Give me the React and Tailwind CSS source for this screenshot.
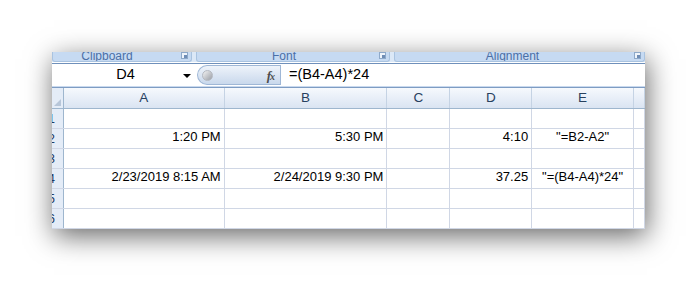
import React from "react";

const cols = [
  { key: "A", w: "w-[161px]" },
  { key: "B", w: "w-[163px]" },
  { key: "C", w: "w-[63px]" },
  { key: "D", w: "w-[82px]" },
  { key: "E", w: "w-[102px]" },
  { key: "F", w: "w-[11px]" },
];

const rows = [
  { n: 1, cells: {} },
  { n: 2, cells: { A: "1:20 PM", B: "5:30 PM", D: "4:10", E: '"=B2-A2"' } },
  { n: 3, cells: {} },
  { n: 4, cells: { A: "2/23/2019 8:15 AM", B: "2/24/2019 9:30 PM", D: "37.25", E: '"=(B4-A4)*24"' } },
  { n: 5, cells: {} },
  { n: 6, cells: {} },
];

function Launcher() {
  return (
    <div className="w-[7px] h-[7px] border border-[#8ea9c9] bg-[#eef4fb] flex items-end justify-end">
      <div className="w-[3px] h-[3px] bg-[#6f8db5]" />
    </div>
  );
}

function Group({ label, w, pad }) {
  return (
    <div className={`${w} h-[10px] relative bg-[#c6daf2] border-x border-b border-[#a9c3e0] rounded-b-[3px] overflow-hidden`}>
      <div className={`text-center text-[12px] leading-[12px] -mt-[2px] text-[#4b6fa6] ${pad}`}>{label}</div>
      <div className="absolute right-[3px] top-0">
        <Launcher />
      </div>
    </div>
  );
}

function App() {
  return (
    <div className="w-[697px] h-[281px] bg-white pt-[52px] pl-[52px] font-['Liberation_Sans',Arial,sans-serif]">
      <div className="w-[593px] h-[177px] bg-white flex flex-col overflow-hidden shadow-[2px_7px_26px_rgba(0,0,0,0.6)]">
        {/* ribbon group labels */}
        <div className="h-[10px] flex gap-[4px] bg-[#dbe8f7]">
          <Group label="Clipboard" w="w-[140px]" pad="pr-[30px]" />
          <Group label="Font" w="w-[194px]" pad="pr-[18px]" />
          <Group label="Alignment" w="w-[251px]" pad="pr-[14px]" />
        </div>
        <div className="h-[1px] bg-white" />
        <div className="h-[1px] bg-[#6f90bb]" />
        <div className="h-[1px] bg-[#c9d9ee]" />

        {/* formula bar */}
        <div className="h-[24px] flex items-center bg-white">
          <div className="w-[145px] h-full flex items-center relative">
            <span className="w-full text-center text-[14.5px] pl-[2px] text-black">D4</span>
            <span className="absolute left-[131px] top-[10px] w-0 h-0 border-x-[4px] border-x-transparent border-t-[4px] border-t-black" />
          </div>
          <div className="w-[83px] h-[20px] rounded-l-full border border-r-0 border-[#9fb7d6] bg-gradient-to-b from-[#eef3fa] to-[#c9d8ec] flex items-center justify-between pl-[4px] pr-[6px]">
            <div className="w-[11px] h-[11px] rounded-full bg-gradient-to-br from-[#f4f4f4] to-[#9a9ea6] border border-[#b4b8c0]" />
            <span className="font-['Liberation_Serif',serif] italic font-bold text-[13px] text-[#4d4d4d] tracking-[-1px]">
              f<span className="text-[10px]">x</span>
            </span>
          </div>
          <div className="h-[20px] w-[1px] bg-[#9fb7d6]" />
          <div className="pl-[8px] text-[14.5px] text-black">=(B4-A4)*24</div>
        </div>
        <div className="h-[1px] bg-[#c9d9ee]" />
        <div className="h-[1px] bg-[#7e9cc3]" />

        {/* column header */}
        <div className="h-[22px] flex bg-gradient-to-b from-[#f6f9fd] to-[#dae4f2] border-b border-[#9eb6ce]">
          <div className="w-[12px] h-full border-r border-[#9eb6ce] relative bg-[#e4ecf7]">
            <div className="absolute right-[2px] bottom-[2px] w-0 h-0 border-l-[7px] border-l-transparent border-b-[7px] border-b-[#b7c6d9]" />
          </div>
          {cols.map((c) => (
            <div
              key={c.key}
              className={`${c.w} h-full border-r border-[#c5d3e4] flex items-center justify-center text-[13.5px] text-[#27415f]`}
            >
              {c.key === "F" ? "" : c.key}
            </div>
          ))}
        </div>

        {/* grid rows */}
        {rows.map((r) => (
          <div key={r.n} className="h-[20px] shrink-0 flex border-b border-[#d0d7e5]">
            <div className="w-[12px] h-full border-r border-[#9eb6ce] bg-[#e4ecf7] overflow-hidden flex items-center justify-end">
              <span className="text-[13px] text-[#1f3b63] mr-[8px] whitespace-nowrap">{r.n}</span>
            </div>
            {cols.map((c) => {
              const v = r.cells[c.key];
              const center = c.key === "E";
              return (
                <div
                  key={c.key}
                  className={`${c.w} h-full border-r border-[#d0d7e5] flex items-end pb-[1px] text-[13px] text-black whitespace-nowrap ${
                    center ? "justify-center" : "justify-end pr-[3px]"
                  }`}
                >
                  {v || ""}
                </div>
              );
            })}
          </div>
        ))}
      </div>
    </div>
  );
}

export default App;
